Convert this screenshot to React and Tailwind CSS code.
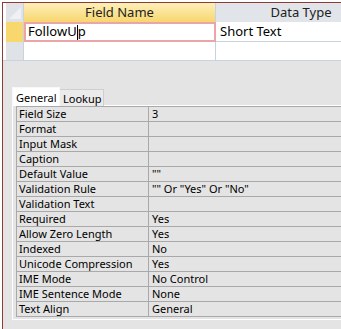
import React from 'react'

const props = [
  ['Field Size', '3'],
  ['Format', ''],
  ['Input Mask', ''],
  ['Caption', ''],
  ['Default Value', '""'],
  ['Validation Rule', '"" Or "Yes" Or "No"'],
  ['Validation Text', ''],
  ['Required', 'Yes'],
  ['Allow Zero Length', 'Yes'],
  ['Indexed', 'No'],
  ['Unicode Compression', 'Yes'],
  ['IME Mode', 'No Control'],
  ['IME Sentence Mode', 'None'],
  ['Text Align', 'General'],
]

export default function App() {
  return (
    <div className="w-[341px] h-[329px] overflow-hidden bg-white pl-[2px] pt-[2px] font-['Noto_Sans',sans-serif]">
      <div className="h-full border-l border-t border-[#8e3b33] flex flex-col">
        {/* design grid */}
        <div className="bg-white pl-[3px] border-b border-[#c9d3de] overflow-hidden">
          <div className="flex h-[19px] text-[13px] text-[#222] w-[380px]">
            <div className="w-[18px] shrink-0 bg-[#dfe3e8] border-r border-[#c9d3de] relative">
              <svg width="18" height="19" className="absolute inset-0">
                <path d="M3 16 L15 4 L15 16 Z" fill="#eef0f3" />
              </svg>
            </div>
            <div className="w-[192px] shrink-0 bg-gradient-to-b from-[#fdefb8] to-[#f8d66d] border-r border-[#c9d3de] flex items-center justify-center">
              Field Name
            </div>
            <div className="flex-1 bg-[#e1e4e8] flex items-center justify-center">Data Type</div>
          </div>
          <div className="flex h-[20px] text-[13px] text-black w-[380px]">
            <div className="w-[18px] shrink-0 bg-[#f8d86c] border-r border-[#c9d3de]" />
            <div className="w-[192px] shrink-0 border-2 border-[#e9a5a8] flex items-center pl-[2px]">
              <span>FollowU</span>
              <span className="w-px h-[15px] bg-black" />
              <span>p</span>
            </div>
            <div className="flex-1 flex items-center pl-[4px] border-b border-[#c9d3de]">Short Text</div>
          </div>
          <div className="flex h-[18px] w-[380px]">
            <div className="w-[18px] shrink-0 bg-[#dfe3e8] border-r border-[#c9d3de]" />
            <div className="w-[192px] shrink-0 border-r border-[#c9d3de]" />
            <div className="flex-1" />
          </div>
        </div>

        {/* property sheet */}
        <div className="flex-1 bg-[#e4e4e4] pt-[26px] pl-[9px]">
          <div className="flex items-end h-[19px] text-[11px] text-black">
            <div className="h-[19px] w-[48px] bg-white border-t border-l border-r border-[#f8f8f8] flex items-center pl-[3px] leading-none">
              General
            </div>
            <div className="h-[17px] w-[44px] bg-[#ebebeb] border-t border-r border-[#cfcfcf] flex items-center pl-[3px] leading-none">
              Lookup
            </div>
            <div className="flex-1 h-px bg-white" />
          </div>
          <div className="border-l border-white pl-[3px] pb-[2px] border-b">
            <div className="border-t border-l border-[#a9a9a9] text-[11px] text-black">
              {props.map(([k, v]) => (
                <div key={k} className="flex h-[15px] border-b border-[#a9a9a9] leading-[14px]">
                  <div className="w-[132px] border-r border-[#a9a9a9] pl-[2px] whitespace-nowrap">{k}</div>
                  <div className="flex-1 pl-[3px] whitespace-nowrap">{v}</div>
                </div>
              ))}
            </div>
          </div>
        </div>
      </div>
    </div>
  )
}
